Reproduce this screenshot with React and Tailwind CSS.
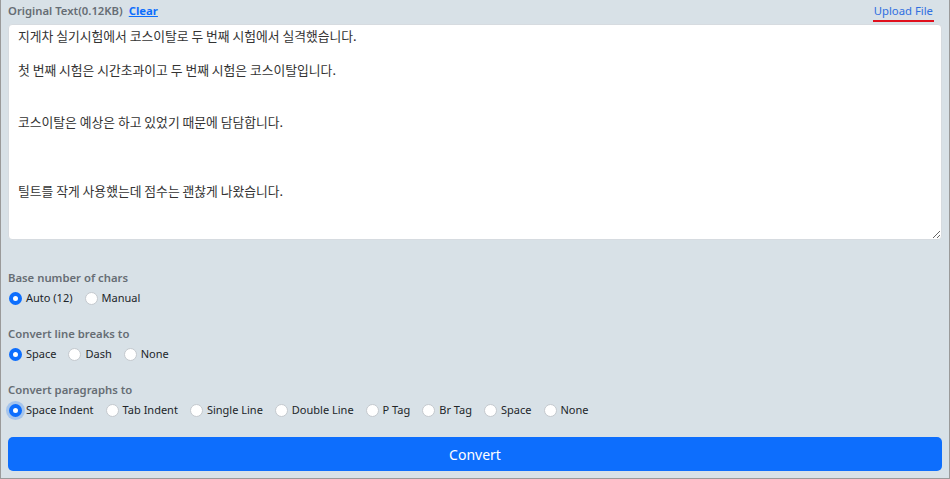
import React, { useState } from 'react';

const sample =
    '지게차 실기시험에서 코스이탈로 두 번째 시험에서 실격했습니다.\n\n첫 번째 시험은 시간초과이고 두 번째 시험은 코스이탈입니다.\n\n\n코스이탈은 예상은 하고 있었기 때문에 담담합니다.\n\n\n\n틸트를 작게 사용했는데 점수는 괜찮게 나왔습니다.';

const groups = [
    { title: 'Base number of chars', options: ['Auto (12)', 'Manual'] },
    { title: 'Convert line breaks to', options: ['Space', 'Dash', 'None'] },
    {
        title: 'Convert paragraphs to',
        options: ['Space Indent', 'Tab Indent', 'Single Line', 'Double Line', 'P Tag', 'Br Tag', 'Space', 'None'],
        focus: true,
    },
];

const Radio = ({ label, checked, focus, onClick }) => (
    <label className="flex items-center cursor-pointer mr-[12px]" onClick={onClick}>
        {checked ? (
            <span
                className={`w-[13px] h-[13px] rounded-full bg-white border-[4px] border-[#0d6efd] ${
                    focus ? 'ring-[3px] ring-[#0d6efd]/25' : ''
                }`}
            />
        ) : (
            <span className="w-[13px] h-[13px] rounded-full bg-white border border-[#c4c9ce]" />
        )}
        <span className="ml-[4px] text-[11px] text-[#212529] leading-[16px]">{label}</span>
    </label>
);

const App = () => {
    const [text, setText] = useState(sample);
    const [picked, setPicked] = useState([0, 0, 0]);

    return (
        <div
            className="w-[950px] h-[479px] bg-[#d8e1e7] border-l border-r border-b border-[#9a9a9a] px-[7px] pt-[3px]"
            style={{ fontFamily: '"Noto Sans", "Noto Sans CJK KR", sans-serif' }}
        >
            <div className="flex justify-between items-start leading-[16px] text-[11.3px]">
                <div className="flex items-center">
                    <span className="font-semibold text-[#666d74]">Original Text(0.12KB)</span>
                    <button onClick={() => setText('')} className="ml-[6px] font-bold text-[#0d6efd] underline">
                        Clear
                    </button>
                </div>
                <span className="mr-[8px] text-[#2f6fe0] border-b-2 border-[#e0101c] pb-[1px] px-[1px]">
                    Upload File
                </span>
            </div>

            <textarea
                value={text}
                onChange={e => setText(e.target.value)}
                className="mt-[2px] block w-full h-[216px] bg-white border border-[#d6dbe0] rounded-[4px] px-[9px] pt-[2px] pb-[4px] text-[12.8px] leading-[17.2px] text-[#333] outline-none"
                style={{ fontFamily: '"Noto Sans CJK KR", "Noto Sans", sans-serif' }}
            />

            {groups.map((g, gi) => (
                <div key={g.title} className={gi === 0 ? 'mt-[30px]' : 'mt-[20px]'}>
                    <div className="text-[11.3px] leading-[16px] font-semibold text-[#666d74]">{g.title}</div>
                    <div className="flex mt-[4px] pl-[1px]">
                        {g.options.map((o, oi) => (
                            <Radio
                                key={o}
                                label={o}
                                checked={picked[gi] === oi}
                                focus={g.focus && oi === 0}
                                onClick={() => setPicked(p => p.map((v, i) => (i === gi ? oi : v)))}
                            />
                        ))}
                    </div>
                </div>
            ))}

            <button className="mt-[19px] w-full h-[34px] bg-[#0d6efd] rounded-[5px] text-white text-[14px]">
                Convert
            </button>
        </div>
    );
};

export default App;
